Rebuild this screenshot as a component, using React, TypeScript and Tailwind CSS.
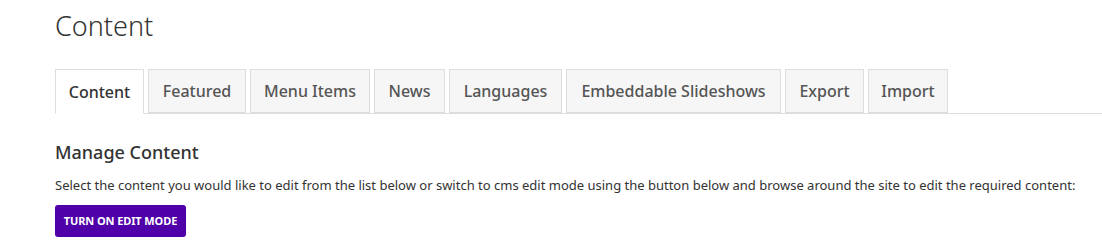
import React from "react";

const tabs: { label: string; w: string }[] = [
  { label: "Content", w: "w-[89px]" },
  { label: "Featured", w: "w-[98px]" },
  { label: "Menu Items", w: "w-[120px]" },
  { label: "News", w: "w-[71px]" },
  { label: "Languages", w: "w-[113px]" },
  { label: "Embeddable Slideshows", w: "w-[215px]" },
  { label: "Export", w: "w-[79px]" },
  { label: "Import", w: "w-[80px]" },
];

export default function App() {
  return (
    <div
      className="w-[1102px] h-[247px] bg-white pl-[55px] overflow-hidden"
      style={{ fontFamily: '"Noto Sans", "Open Sans", sans-serif' }}
    >
      <h1 className="pt-[8px] text-[27px] font-light leading-[36px] text-[#333]">Content</h1>
      <div className="mt-[25px] flex border-b border-[#ddd] gap-[4px]">
        {tabs.map((t, i) => (
          <div
            key={t.label}
            className={
              i === 0
                ? `${t.w} -mb-px h-[45px] flex items-center justify-center border border-[#ddd] border-b-white bg-white text-[16px] font-medium text-[#333] whitespace-nowrap`
                : `${t.w} h-[44px] flex items-center justify-center border border-[#ddd] bg-[#f6f6f6] text-[16px] font-medium text-[#555] whitespace-nowrap`
            }
          >
            {t.label}
          </div>
        ))}
      </div>
      <h2 className="mt-[26px] text-[18px] font-medium leading-[24px] text-[#333]">Manage Content</h2>
      <p className="mt-[11px] text-[13px] leading-[20px] text-[#333]">
        Select the content you would like to edit from the list below or switch to cms edit mode using the button below and browse around the site to edit the required content:
      </p>
      <button className="mt-[10px] h-[32px] w-[131px] rounded-[3px] bg-[#5000a8] text-white text-[11px] font-bold tracking-[-0.1px]">
        TURN ON EDIT MODE
      </button>
    </div>
  );
}
